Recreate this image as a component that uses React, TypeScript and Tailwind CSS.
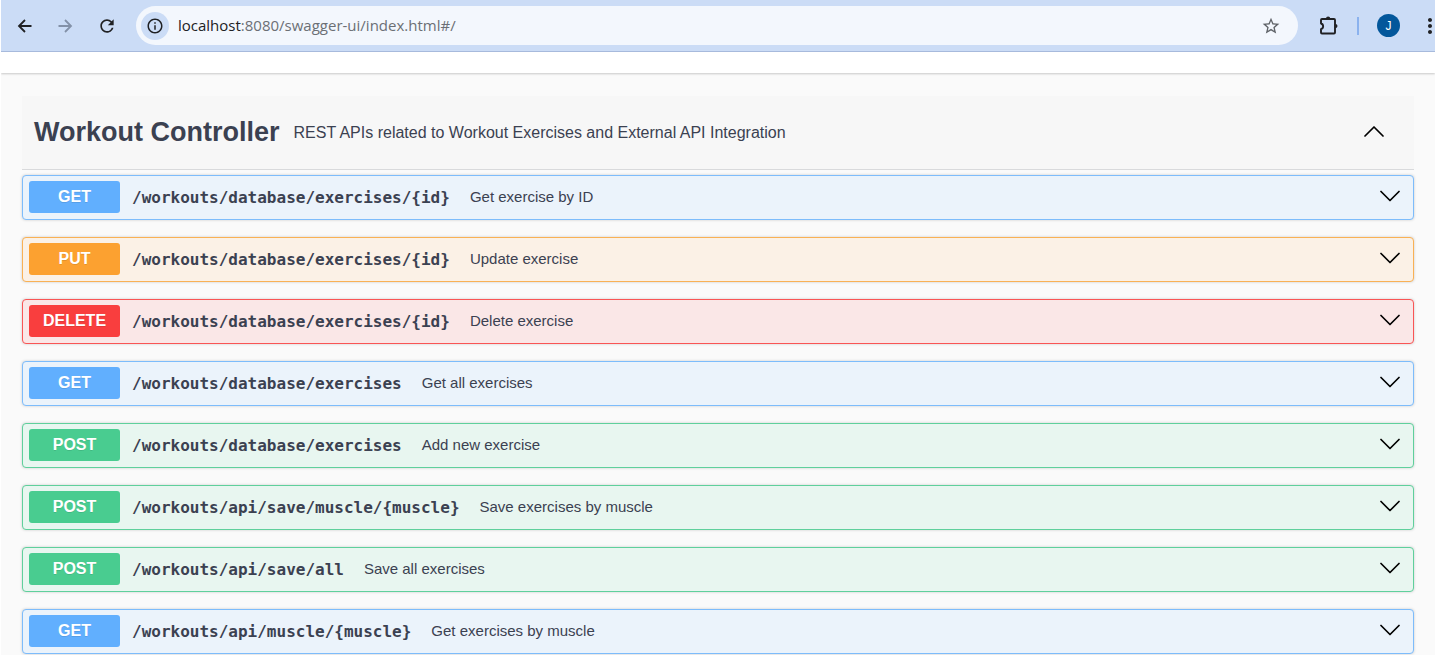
import { MdMoreVert, MdOutlineInfo, MdRefresh, MdStarBorder } from "react-icons/md";

type Method = "GET" | "PUT" | "DELETE" | "POST";

interface Endpoint {
  method: Method;
  path: string;
  summary: string;
}

const endpoints: Endpoint[] = [
  { method: "GET", path: "/workouts/database/exercises/{id}", summary: "Get exercise by ID" },
  { method: "PUT", path: "/workouts/database/exercises/{id}", summary: "Update exercise" },
  { method: "DELETE", path: "/workouts/database/exercises/{id}", summary: "Delete exercise" },
  { method: "GET", path: "/workouts/database/exercises", summary: "Get all exercises" },
  { method: "POST", path: "/workouts/database/exercises", summary: "Add new exercise" },
  { method: "POST", path: "/workouts/api/save/muscle/{muscle}", summary: "Save exercises by muscle" },
  { method: "POST", path: "/workouts/api/save/all", summary: "Save all exercises" },
  { method: "GET", path: "/workouts/api/muscle/{muscle}", summary: "Get exercises by muscle" },
];

const rowColors: Record<Method, string> = {
  GET: "border-[#7dbcfb] bg-[#ebf3fb]",
  PUT: "border-[#f9b155] bg-[#fbf1e6]",
  DELETE: "border-[#f95555] bg-[#fae7e7]",
  POST: "border-[#5fd09c] bg-[#e8f6f0]",
};

const badgeColors: Record<Method, string> = {
  GET: "bg-[#61affe]",
  PUT: "bg-[#fca130]",
  DELETE: "bg-[#f93e3e]",
  POST: "bg-[#49cc90]",
};

function Arrow({ forward = false }: { forward?: boolean }) {
  return (
    <svg viewBox="0 0 16 16" className="size-4" fill="none" stroke="currentColor" strokeWidth="1.8" aria-hidden="true">
      {forward ? <path d="M1.5 8h12M8 2l6 6-6 6" /> : <path d="M14.5 8h-12M8 2L2 8l6 6" />}
    </svg>
  );
}

function Puzzle() {
  return (
    <svg viewBox="0 0 20 20" className="size-5" aria-hidden="true">
      <path
        d="M2 4a1 1 0 0 1 1-1h12a1 1 0 0 1 1 1v12.5a1 1 0 0 1-1 1H3a1 1 0 0 1-1-1v-3.4a2.9 2.9 0 0 0 0-5.6z"
        fill="none"
        stroke="currentColor"
        strokeWidth="1.9"
        strokeLinejoin="round"
      />
      <path d="M7 2.6a2.1 2.1 0 0 1 4.2 0zM16.4 8a2.1 2.1 0 0 1 0 4.2z" fill="currentColor" />
    </svg>
  );
}

function Chevron({ up = false }: { up?: boolean }) {
  return (
    <svg
      viewBox="0 0 20 20"
      className="size-5 shrink-0 text-black"
      fill="none"
      stroke="currentColor"
      strokeWidth="1.7"
      strokeLinecap="round"
      strokeLinejoin="round"
      aria-hidden="true"
    >
      {up ? <path d="M1 13l9-9 9 9" /> : <path d="M1 4.5l9 9 9-9" />}
    </svg>
  );
}

function BrowserBar() {
  return (
    <header className="flex h-[52px] items-center border-b border-[#a9bddf] bg-[#cbdcf6] pl-4 text-[#202124]">
      <nav className="flex items-center gap-6" aria-label="Browser">
        <button type="button" aria-label="Back" className="flex size-4 items-center justify-center">
          <Arrow />
        </button>
        <button type="button" aria-label="Forward" className="flex size-4 items-center justify-center text-[#8391a8]">
          <Arrow forward />
        </button>
        <button type="button" aria-label="Reload" className="flex size-5 items-center justify-center">
          <MdRefresh className="size-5" />
        </button>
      </nav>
      <div className="ml-[19px] flex h-[39px] flex-1 items-center rounded-full bg-[#f3f7fd] pr-[17px] pl-[5px]">
        <button
          type="button"
          aria-label="Site information"
          className="flex size-7 items-center justify-center rounded-full bg-[#cbdcf6]"
        >
          <MdOutlineInfo className="size-[18px]" />
        </button>
        <a
          href="#/"
          className="ml-[9px] flex-1 font-['Open_Sans','Noto_Sans',sans-serif] text-[15px] text-[#6b6f75]"
        >
          <span className="text-[#202124]">localhost</span>:8080/swagger-ui/index.html#/
        </a>
        <button type="button" aria-label="Bookmark this page" className="text-[#5f6368]">
          <MdStarBorder className="size-5" />
        </button>
      </div>
      <button type="button" aria-label="Extensions" className="ml-[21px]">
        <Puzzle />
      </button>
      <span className="ml-[18px] h-[18px] w-0.5 bg-[#8bb2ee]" />
      <button
        type="button"
        aria-label="Profile"
        className="ml-[18px] flex size-[23px] items-center justify-center rounded-full bg-[#03579b] text-xs text-white"
      >
        J
      </button>
      <button type="button" aria-label="Menu" className="-mr-[7px] ml-[18px]">
        <MdMoreVert className="size-6" />
      </button>
    </header>
  );
}

function EndpointRow({ method, path, summary }: Endpoint) {
  return (
    <li>
      <button
        type="button"
        className={`flex h-[45px] w-full items-center rounded-[4px] border pr-[13px] pb-px pl-1.5 text-left shadow-[0_0_3px_rgba(0,0,0,0.19)] ${rowColors[method]}`}
      >
        <span
          className={`flex h-8 w-[91px] shrink-0 items-center justify-center rounded-[3px] text-base font-bold text-white [text-shadow:0_1px_0_rgba(0,0,0,0.1)] ${badgeColors[method]}`}
        >
          {method}
        </span>
        <span className="ml-3 pt-0.5 font-['DejaVu_Sans_Mono',monospace] text-base font-bold whitespace-nowrap">
          {path}
        </span>
        <span className="ml-5 flex-1 text-[15px] whitespace-nowrap">{summary}</span>
        <Chevron />
      </button>
    </li>
  );
}

export default function App() {
  return (
    <div className="h-screen overflow-hidden border-l border-white bg-[#fafafa] font-['Liberation_Sans',Arial,sans-serif] text-[#3b4151]">
      <BrowserBar />
      <div className="h-[21px] bg-white shadow-[0_1px_2px_rgba(0,0,0,0.2)]" />
      <main className="px-[21px] pt-[23px]">
        <h2 className="border-b border-[#d9dadc] bg-[#f7f7f7]">
          <button type="button" className="flex h-[73px] w-full items-center pr-[30px] pl-3 text-left">
            <span className="text-[27px] font-bold whitespace-nowrap">Workout Controller</span>
            <span className="ml-[14px] flex-1 text-base font-normal">
              REST APIs related to Workout Exercises and External API Integration
            </span>
            <Chevron up />
          </button>
        </h2>
        <ul className="mt-[5px] flex flex-col gap-[17px]">
          {endpoints.map((endpoint) => (
            <EndpointRow key={`${endpoint.method} ${endpoint.path}`} {...endpoint} />
          ))}
        </ul>
      </main>
    </div>
  );
}
